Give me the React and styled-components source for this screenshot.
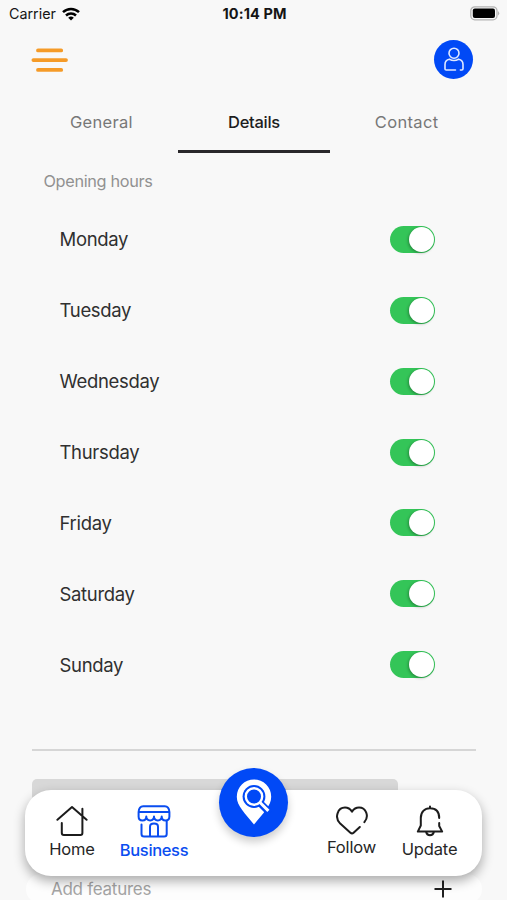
import React from "react";
import styled, { createGlobalStyle } from "styled-components";

const Global = createGlobalStyle`
  *, *::before, *::after { box-sizing: border-box; }
  html, body { margin: 0; padding: 0; background: #f8f8f8; overflow: hidden; }
  svg { display: block; }
`;

const Screen = styled.div`
  position: relative;
  width: 507px;
  height: 900px;
  overflow: hidden;
  background: #f8f8f8;
  color: #2b2b2b;
  font-family: Inter, "Liberation Sans", sans-serif;
`;

const StatusBar = styled.div`
  display: grid;
  grid-template-columns: 1fr auto 1fr;
  align-items: center;
  height: 27px;
  padding: 0 7px 0 9px;
  color: #151515;
`;

const Carrier = styled.div`
  display: flex;
  align-items: center;
  gap: 6px;
  font-size: 14.3px;
`;

const Clock = styled.div`
  font-size: 14.5px;
  font-weight: 700;
  letter-spacing: 0.1px;
  white-space: nowrap;
`;

const BatterySlot = styled.div`
  display: flex;
  justify-content: flex-end;
`;

const Header = styled.header`
  display: flex;
  align-items: center;
  justify-content: space-between;
  height: 65px;
  padding: 0 34px 0 31px;
`;

const IconButton = styled.button`
  display: flex;
  padding: 0;
  border: 0;
  background: none;
`;

const Avatar = styled(IconButton)`
  align-items: center;
  justify-content: center;
  width: 39px;
  height: 39px;
  border-radius: 50%;
  background: #0149f6;
`;

const Tabs = styled.nav`
  display: grid;
  grid-template-columns: repeat(3, 1fr);
  height: 61px;
  margin: 0 24px 0 25px;
`;

const Tab = styled.div`
  display: flex;
  align-items: center;
  justify-content: center;
  height: 61px;
  padding-top: 1px;
  border-bottom: 3px solid ${(p) => (p.$active ? "#2a282b" : "transparent")};
  color: ${(p) => (p.$active ? "#1e1e1e" : "#777")};
  font-size: 16.5px;
  font-weight: ${(p) => (p.$active ? 500 : 400)};
  letter-spacing: ${(p) => p.$ls};
`;

const SectionTitle = styled.h2`
  margin: 0;
  padding: 16px 0 0 43.5px;
  height: 51px;
  color: #919191;
  font-size: 16.3px;
  font-weight: 400;
  line-height: 24px;
  letter-spacing: -0.33px;
`;

const DayList = styled.div`
  display: flex;
  flex-direction: column;
  padding: 0 72.5px 0 59.5px;
`;

const DayRow = styled.div`
  display: flex;
  align-items: center;
  justify-content: space-between;
  height: 70.87px;
  color: #303030;
  font-size: 18.5px;
  letter-spacing: -0.32px;
`;

const Switch = styled.div`
  display: flex;
  align-items: center;
  justify-content: flex-end;
  width: 44.5px;
  height: 27px;
  padding: 1px;
  border-radius: 14px;
  background: #34c558;
`;

const Knob = styled.div`
  width: 25px;
  height: 25px;
  border-radius: 50%;
  background: #fff;
  box-shadow: -1px 1px 3px rgba(0, 0, 0, 0.3);
`;

const Divider = styled.div`
  height: 2px;
  margin: 48.5px 31px 0 32px;
  background: #d6d6d6;
`;

const GrayPanel = styled.div`
  width: 366px;
  height: 60px;
  margin: 28.4px 0 0 32px;
  border-radius: 5px;
  background: #d8d8d8;
`;

const FeatureField = styled.div`
  display: flex;
  align-items: center;
  justify-content: space-between;
  height: 30px;
  margin: 35px 25px 0 26px;
  padding: 0 30px 0 25px;
  border-radius: 15px;
  background: #fdfdfd;
  color: #a4a4a4;
  font-size: 17px;
  letter-spacing: -0.27px;
`;

const BottomNav = styled.nav`
  position: absolute;
  left: 25px;
  top: 790px;
  width: 457px;
  height: 86px;
  display: grid;
  grid-template-columns: 94px 70px 129px 67px 89px;
  border-radius: 26px;
  background: #fff;
  box-shadow: 0 5px 12px rgba(0, 0, 0, 0.33);
`;

const NavItem = styled.div`
  display: flex;
  flex-direction: column;
  align-items: center;
  padding-top: ${(p) => p.$top || "15px"};
  gap: 1px;
  color: ${(p) => (p.$active ? "#0a4df0" : "#262626")};
  font-size: 16.5px;
  font-weight: ${(p) => (p.$active ? 500 : 400)};
  line-height: 22px;
  letter-spacing: ${(p) => p.$ls || "-0.15px"};
`;

const SearchButton = styled.button`
  position: absolute;
  left: 219px;
  top: 768px;
  display: flex;
  align-items: center;
  justify-content: center;
  width: 69px;
  height: 69px;
  padding: 0 0 2px;
  border: 0;
  border-radius: 50%;
  background: #0149f6;
  box-shadow: 0 5px 8px rgba(0, 0, 0, 0.2);
`;

const WifiIcon = () => (
  <svg width="18" height="14" viewBox="0 0 18 14" fill="none" stroke="#000" strokeWidth="2.5">
    <path d="M1 5.2a11.6 11.6 0 0 1 16 0" />
    <path d="M4 8.5a7.3 7.3 0 0 1 10 0" />
    <path d="M9 13.6 6.2 10.8a4 4 0 0 1 5.6 0Z" fill="#000" stroke="none" />
  </svg>
);

const BatteryIcon = () => (
  <svg width="31" height="15" viewBox="0 0 31 15">
    <rect x="1.8" y=".8" width="26.2" height="13" rx="4" fill="#f8f8f8" stroke="#b3b3b3" strokeWidth="1.3" />
    <rect x="3.8" y="2.5" width="22.2" height="9.6" rx="2" fill="#000" />
    <path d="M29.2 5q2 2.3 0 4.6Z" fill="#a5a5a5" />
  </svg>
);

const MenuIcon = () => (
  <svg width="38" height="26" viewBox="0 0 38 26" stroke="#f59b28" strokeWidth="3.8" strokeLinecap="round">
    <path d="M7 3.4h23.2M2.4 13.1h32.6M7 22.9h23.2" />
  </svg>
);

const PersonIcon = () => (
  <svg width="22" height="26" viewBox="0 0 22 26" fill="none" stroke="#dfe8ff" strokeWidth="1.6" strokeLinecap="round">
    <circle cx="11" cy="6.2" r="5" />
    <path d="M12.5 23H3.2Q2 23 2 22V17.5q0-4.6 4.4-5.3Q11 14.8 15.6 12.2 20 12.9 20 17.5v4.3q0 1.2-1.2 1.2h-1.4" />
  </svg>
);

const HomeIcon = () => (
  <svg width="32" height="32" viewBox="0 0 32 32" fill="none" stroke="#1c1c1c" strokeWidth="2" strokeLinecap="round" strokeLinejoin="round">
    <path d="M1.4 14.8 16 2l14.6 12.8M26.4 3.8V28q0 2-2 2H7.8q-2 0-2-2V18" />
  </svg>
);

const StoreIcon = () => (
  <svg width="34" height="33" viewBox="0 0 34 33" fill="none" stroke="#0a4df0" strokeWidth="2" strokeLinecap="round" strokeLinejoin="round">
    <path d="M6.2 1.2h21.6q4.2 0 4.6 5.8v4.6c0 5.3-7.7 5.3-7.7 0 0 5.1-7.7 5.1-7.7 0 0 5.1-7.7 5.1-7.7 0 0 5.3-7.7 5.3-7.7 0V7q.4-5.8 4.6-5.8ZM2 7.1h30M4.5 19.5V29q0 2.6 2.6 2.6h20q2.6 0 2.6-2.6V15.5" />
    <path d="M13 31V21.7q0-3.1 4-3.1t4 3.1V31" />
  </svg>
);

const HeartIcon = () => (
  <svg width="32" height="29" viewBox="0 0 32 29" fill="none" stroke="#1c1c1c" strokeWidth="2" strokeLinecap="round" strokeLinejoin="round">
    <path d="M23.8 21 17.6 26.7q-1.6 1.4-3.2 0L4.2 17.6C-2 11.5 1.8 1.6 9 1.6q4.3 0 7 4 2.7-4 7-4c7 0 10.5 8.7 5.4 14.6" />
  </svg>
);

const BellIcon = () => (
  <svg width="28" height="32" viewBox="0 0 28 32" fill="none" stroke="#1c1c1c" strokeWidth="2" strokeLinecap="round" strokeLinejoin="round">
    <path d="M14 1.6v1.6M23.2 13C23.2 6.5 19.5 3.2 14 3.2S4.8 7 4.8 13v7.5L1.8 26.6h24.4L23.2 21V18" />
    <path d="M10.2 27q.6 3.2 3.8 3.2t3.8-3.2" />
  </svg>
);

const PinIcon = () => (
  <svg width="36" height="48" viewBox="0 0 36 48" fill="none">
    <path d="M18 1.5A17.2 17.2 0 0 0 .8 18.7C.8 28 9 35 18 46.6 27 35 35.2 28 35.2 18.7A17.2 17.2 0 0 0 18 1.5Z" fill="#fff" />
    <path d="m23 24 11 11" stroke="#0149f6" strokeWidth="7" />
    <circle cx="18" cy="18.5" r="11.4" fill="#0149f6" />
    <circle cx="18" cy="18.5" r="8.2" stroke="#fff" strokeWidth="2.4" />
    <path d="m24 24.5 8.4 8.4" stroke="#fff" strokeWidth="3" />
  </svg>
);

const PlusIcon = () => (
  <svg width="18" height="18" viewBox="0 0 18 18" stroke="#202020" strokeWidth="2">
    <path d="M9 .5v17M.5 9h17" />
  </svg>
);

const days = ["Monday", "Tuesday", "Wednesday", "Thursday", "Friday", "Saturday", "Sunday"];

export default function App() {
  return (
    <>
      <Global />
      <Screen>
        <StatusBar>
          <Carrier><span>Carrier</span><WifiIcon /></Carrier>
          <Clock>10:14 PM</Clock>
          <BatterySlot><BatteryIcon /></BatterySlot>
        </StatusBar>
        <Header>
          <IconButton aria-label="Menu"><MenuIcon /></IconButton>
          <Avatar aria-label="Profile"><PersonIcon /></Avatar>
        </Header>
        <Tabs>
          <Tab $ls="0.3px">General</Tab>
          <Tab $active $ls="-0.3px">Details</Tab>
          <Tab $ls="0.35px">Contact</Tab>
        </Tabs>
        <SectionTitle>Opening hours</SectionTitle>
        <DayList>
          {days.map((day) => (
            <DayRow key={day}>
              <span>{day}</span>
              <Switch role="switch" aria-checked="true"><Knob /></Switch>
            </DayRow>
          ))}
        </DayList>
        <Divider />
        <GrayPanel />
        <FeatureField><span>Add features</span><PlusIcon /></FeatureField>
        <BottomNav>
          <NavItem><HomeIcon />Home</NavItem>
          <NavItem $active $ls="-0.35px"><StoreIcon />Business</NavItem>
          <span />
          <NavItem $top="16px"><HeartIcon />Follow</NavItem>
          <NavItem><BellIcon />Update</NavItem>
        </BottomNav>
        <SearchButton aria-label="Search nearby"><PinIcon /></SearchButton>
      </Screen>
    </>
  );
}
